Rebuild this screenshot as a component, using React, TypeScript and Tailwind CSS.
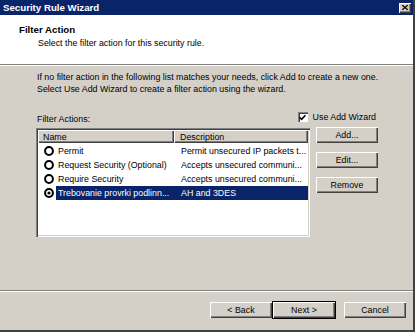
import React from 'react';

const raised =
  'bg-[#d4d0c8] shadow-[inset_1px_1px_0_#ffffff,inset_-1px_-1px_0_#404040,inset_-2px_-2px_0_#808080]';

type Row = { name: string; desc: string; selected?: boolean };

const rows: Row[] = [
  { name: 'Permit', desc: 'Permit unsecured IP packets t...' },
  { name: 'Request Security (Optional)', desc: 'Accepts unsecured communi...' },
  { name: 'Require Security', desc: 'Accepts unsecured communi...' },
  { name: 'Trebovanie provrki podlinn...', desc: 'AH and 3DES', selected: true },
];

function Radio({ on }: { on?: boolean }) {
  return (
    <svg width="10" height="10" viewBox="0 0 10 10" className="shrink-0">
      <circle cx="5" cy="5" r="3.9" fill="#fff" stroke="#000" strokeWidth="2" />
      {on && <circle cx="5" cy="5" r="1.6" fill="#000" />}
    </svg>
  );
}

function WinButton({ label, isDefault }: { label: string; isDefault?: boolean }) {
  return (
    <div
      className={`flex h-[16px] w-[62px] items-center justify-center ${raised} ${
        isDefault ? 'outline outline-1 outline-black' : ''
      }`}
    >
      {label}
    </div>
  );
}

export default function App() {
  return (
    <div
      className="flex h-[332px] w-[415px] flex-col overflow-hidden border-r-2 border-b-2 border-[#404040] bg-[#d4d0c8] text-[8.85px] leading-[12px] text-black"
      style={{ fontFamily: '"Liberation Sans", Arial, sans-serif' }}
    >
      {/* Title bar */}
      <div className="flex h-[15px] shrink-0 items-center justify-between bg-[#0a246a] pl-[3px] pr-[2px]">
        <span className="text-[9.7px] font-bold text-white">Security Rule Wizard</span>
        <div className={`flex h-[10px] w-[12px] items-center justify-center ${raised}`}>
          <svg width="6" height="5" viewBox="0 0 6 5">
            <path d="M0 0L6 5M6 0L0 5" stroke="#000" strokeWidth="1.3" />
          </svg>
        </div>
      </div>

      {/* Header */}
      <div className="flex h-[49px] shrink-0 flex-col bg-white pt-[9px]">
        <div className="pl-[19px] text-[9.7px] font-bold">Filter Action</div>
        <div className="mt-[1px] pl-[38px]">Select the filter action for this security rule.</div>
      </div>
      <div className="h-px shrink-0 bg-[#808080]" />
      <div className="h-px shrink-0 bg-white" />

      {/* Body */}
      <div className="flex flex-1 flex-col pl-[36px] pt-[5px]">
        <div className="pl-[1px]">
          If no filter action in the following list matches your needs, click Add to create a new one.
          <br />
          Select Use Add Wizard to create a filter action using the wizard.
        </div>

        <div className="mt-[16px] flex h-[12px] w-[340px] items-end justify-between pl-[1px]">
          <span className="translate-y-[2px]">Filter Actions:</span>
          <div className="flex items-center gap-[5px]">
            <div className="flex h-[10px] w-[10px] items-center justify-center bg-white shadow-[inset_1px_1px_0_#808080,inset_2px_2px_0_#404040,inset_-1px_-1px_0_#ffffff]">
              <svg width="7" height="7" viewBox="0 0 7 7">
                <path d="M0.5 3.2L2.6 5.3L6.5 1.2" fill="none" stroke="#000" strokeWidth="1.6" />
              </svg>
            </div>
            <span>Use Add Wizard</span>
          </div>
        </div>

        <div className="mt-[4px] flex">
          {/* List */}
          <div className="mt-[1px] flex h-[109px] w-[274px] flex-col bg-white p-[2px] shadow-[inset_1px_1px_0_#808080,inset_2px_2px_0_#404040,inset_-1px_-1px_0_#ffffff,inset_-2px_-2px_0_#d4d0c8]">
            <div className="flex h-[13px] shrink-0">
              <div className={`flex w-[136px] items-center pl-[5px] ${raised}`}>Name</div>
              <div className={`flex w-[134px] items-center pl-[6px] ${raised}`}>Description</div>
            </div>
            <div className="pt-[1px]">
              {rows.map((r) => (
                <div key={r.name} className="flex h-[14px] items-center">
                  <div className="flex w-[18px] justify-end pr-[2px]">
                    <Radio on={r.selected} />
                  </div>
                  <div
                    className={`flex h-full flex-1 items-center ${
                      r.selected ? 'bg-[#0a246a] text-white' : ''
                    }`}
                  >
                    <span className="w-[123px] pl-[2px] whitespace-nowrap">{r.name}</span>
                    <span className="pl-[2px] whitespace-nowrap">{r.desc}</span>
                  </div>
                </div>
              ))}
            </div>
          </div>

          {/* Side buttons */}
          <div className="ml-[6px] flex flex-col gap-[9px]">
            <WinButton label="Add..." />
            <WinButton label="Edit..." />
            <WinButton label="Remove" />
          </div>
        </div>
      </div>

      <div className="h-px shrink-0 bg-[#808080]" />
      <div className="h-px shrink-0 bg-white" />

      {/* Footer */}
      <div className="flex h-[38px] shrink-0 items-start pt-[10px] pl-[210px]">
        <WinButton label="< Back" />
        <div className="ml-[1px]">
          <WinButton label="Next >" isDefault />
        </div>
        <div className="ml-[9px]">
          <WinButton label="Cancel" />
        </div>
      </div>
    </div>
  );
}
